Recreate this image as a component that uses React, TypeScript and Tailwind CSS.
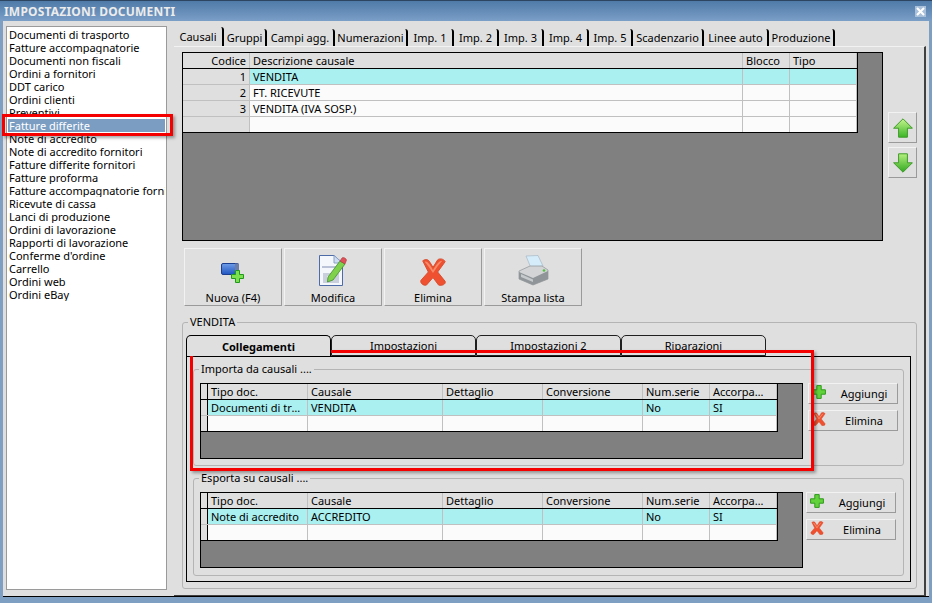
import type { ReactNode } from 'react';

const documentTypes = [
  'Documenti di trasporto',
  'Fatture accompagnatorie',
  'Documenti non fiscali',
  'Ordini a fornitori',
  'DDT carico',
  'Ordini clienti',
  'Preventivi',
  'Fatture differite',
  'Note di accredito',
  'Note di accredito fornitori',
  'Fatture differite fornitori',
  'Fatture proforma',
  'Fatture accompagnatorie fornito',
  'Ricevute di cassa',
  'Lanci di produzione',
  'Ordini di lavorazione',
  'Rapporti di lavorazione',
  "Conferme d'ordine",
  'Carrello',
  'Ordini web',
  'Ordini eBay',
];

const topTabs = [
  { label: 'Causali', width: 'w-[50px]' },
  { label: 'Gruppi', width: 'w-[43px]' },
  { label: 'Campi agg.', width: 'w-[68px]' },
  { label: 'Numerazioni', width: 'w-[73px]' },
  { label: 'Imp. 1', width: 'w-[46px]' },
  { label: 'Imp. 2', width: 'w-[45px]' },
  { label: 'Imp. 3', width: 'w-[45px]' },
  { label: 'Imp. 4', width: 'w-[45px]' },
  { label: 'Imp. 5', width: 'w-[44px]' },
  { label: 'Scadenzario', width: 'w-[71px]' },
  { label: 'Linee auto', width: 'w-[65px]' },
  { label: 'Produzione', width: 'w-[66px]' },
];

const causaliColumns = [
  { label: 'Codice', width: 'w-[67px]', right: true },
  { label: 'Descrizione causale', width: 'w-[493px]' },
  { label: 'Blocco', width: 'w-[47px]' },
  { label: 'Tipo', width: 'w-[67px]' },
];

const linkColumns = [
  { label: '', width: 'w-[7px]', indicator: true },
  { label: 'Tipo doc.', width: 'w-[100px]' },
  { label: 'Causale', width: 'w-[135px]' },
  { label: 'Dettaglio', width: 'w-[100px]' },
  { label: 'Conversione', width: 'w-[100px]' },
  { label: 'Num.serie', width: 'w-[67px]' },
  { label: 'Accorpam...', width: 'w-[67px]' },
];

type Column = { label: string; width: string; right?: boolean; indicator?: boolean };

function DataGrid({
  columns,
  rows,
  className,
  tableWidth,
}: {
  columns: Column[];
  rows: string[][];
  className: string;
  tableWidth: string;
}) {
  return (
    <div className={`border border-black bg-[#808080] ${className}`}>
      <div className={`border-r border-b border-black bg-[#fbfbfb] ${tableWidth}`}>
        <div className="flex h-4 border-b border-black bg-[#dfdfdf]">
          {columns.map((col, i) => (
            <div
              key={i}
              className={`${col.width} shrink-0 border-r border-[#c0c0c0] px-[3px] leading-[15px] truncate ${
                col.right ? 'text-right' : ''
              } ${col.indicator ? 'border-black' : ''}`}
            >
              {col.label}
            </div>
          ))}
        </div>
        {rows.map((row, r) => (
          <div
            key={r}
            className={`flex h-4 border-b border-[#c0c0c0] last:h-[15px] last:border-b-0 ${r === 0 ? 'bg-[#aaf0f0]' : ''}`}
          >
            {columns.map((col, i) => (
              <div
                key={i}
                className={`${col.width} shrink-0 border-r px-[3px] leading-[15px] truncate ${
                  col.right || col.indicator ? 'bg-[#dfdfdf]' : ''
                } ${col.right ? 'text-right' : ''} ${col.indicator ? 'border-black' : 'border-[#c0c0c0]'}`}
              >
                {row[i]}
              </div>
            ))}
          </div>
        ))}
      </div>
    </div>
  );
}

function GroupBox({ title, className, children }: { title: string; className: string; children: ReactNode }) {
  return (
    <div className={`relative rounded-[3px] border border-[#b4b4b4] ${className}`}>
      <span className="absolute left-[5px] top-[-8px] bg-[#dfdfdf] px-[2px] leading-[14px]">{title}</span>
      {children}
    </div>
  );
}

function RaisedButton({ className, children }: { className: string; children: ReactNode }) {
  return (
    <button className={`border border-t-[#f2f2f2] border-l-[#f2f2f2] border-r-[#9a9a9a] border-b-[#9a9a9a] bg-[#dfdfdf] ${className}`}>
      {children}
    </button>
  );
}

function ArrowIcon({ down }: { down?: boolean }) {
  return (
    <svg width="20" height="20" viewBox="0 0 20 20" className={down ? 'rotate-180' : ''}>
      <defs>
        <linearGradient id={down ? 'arrowDown' : 'arrowUp'} x1="0" y1="0" x2="0" y2="1">
          <stop offset="0" stopColor={down ? '#2fa81e' : '#c5f58e'} />
          <stop offset="1" stopColor={down ? '#b6f07f' : '#3bb526'} />
        </linearGradient>
      </defs>
      <path
        d="M10 .8 19.4 10.2H14.4V19.2H5.6V10.2H.6Z"
        fill={`url(#${down ? 'arrowDown' : 'arrowUp'})`}
        stroke="#3f9a2a"
        strokeWidth="1"
        strokeLinejoin="round"
      />
    </svg>
  );
}

function PlusIcon({ size = 14 }: { size?: number }) {
  return (
    <svg width={size} height={size} viewBox="0 0 14 14">
      <path
        d="M4.8.6H9.2V4.8H13.4V9.2H9.2V13.4H4.8V9.2H.6V4.8H4.8Z"
        fill="#62d23a"
        stroke="#2f9a1d"
        strokeWidth="1"
        strokeLinejoin="round"
      />
    </svg>
  );
}

function CrossIcon({ size = 14 }: { size?: number }) {
  return (
    <svg width={size} height={size} viewBox="0 0 28 30">
      <path
        d="M3 3C6 1 9 1 11 5L14 10 19 2C21 0 26 1 27 4L19 15 27 25C28 28 24 30 20 29L14 21 7 29C4 30 0 27 1 24L9 15Z"
        fill="#ee5030"
        stroke="#d84a2a"
        strokeWidth="1"
        strokeLinejoin="round"
      />
      <path d="M5 4C8 3 10 6 14 13 17 8 20 3 24 3 20 7 17 12 14 16 11 12 8 7 5 4Z" fill="#f58a68" />
    </svg>
  );
}

function NewIcon() {
  return (
    <svg width="25" height="23" viewBox="0 0 25 23">
      <defs>
        <linearGradient id="newBlue" x1="0" y1="0" x2="0" y2="1">
          <stop offset="0" stopColor="#6f9de8" />
          <stop offset="1" stopColor="#1f55c0" />
        </linearGradient>
      </defs>
      <rect x="0.5" y="2.5" width="17" height="11" rx="1.5" fill="url(#newBlue)" stroke="#1c3f8f" />
      <rect x="14" y="2.5" width="4" height="11" fill="#6b7fa8" />
      <path
        d="M14.5 9.5H18.5V13.5H22.5V17.5H18.5V21.5H14.5V17.5H10.5V13.5H14.5Z"
        fill="#7de04e"
        stroke="#1f9a1a"
        strokeWidth="1"
      />
    </svg>
  );
}

function EditIcon() {
  return (
    <svg width="28" height="31" viewBox="0 0 28 31">
      <path d="M.5.5H15L23.5 8V30.5H.5Z" fill="#f4f7fc" stroke="#4d6ba6" />
      <path d="M15 .5V8H23.5Z" fill="#cddcf0" stroke="#8aa2c8" />
      <rect x="3" y="11" width="18" height="2" fill="#b9c2d6" />
      <rect x="4" y="18" width="16" height="10" fill="#c9cfdc" />
      <rect x="8" y="21" width="8" height="2" fill="#eef1f6" />
      <path d="M9 22 21 6 26 9 14 25 8.5 27Z" fill="#7fd04a" stroke="#3f8f2a" strokeWidth="0.8" />
      <path d="M21 6 23 3C24 2 27 3 27.5 5L26 9Z" fill="#e0505a" stroke="#a83a3a" strokeWidth="0.6" />
    </svg>
  );
}

function PrinterIcon() {
  return (
    <svg width="31" height="31" viewBox="0 0 31 31">
      <path d="M8 1 20 0.5 25 11 13 13Z" fill="#d5ecfa" stroke="#a8b8c4" strokeWidth="0.7" />
      <path d="M1 16 12 11H24L30 15V24L15 30 1 24Z" fill="#d2d4d6" stroke="#8f9396" strokeWidth="0.7" />
      <path d="M1 17 15 23 30 16V24L15 30 1 24Z" fill="#8f9598" />
      <path d="M3 19 15 24.5 15 27 3 22Z" fill="#c6cacc" />
      <circle cx="26" cy="15.5" r="1.3" fill="#56c040" />
    </svg>
  );
}

function LinkSection({
  title,
  firstRow,
  groupClass,
  gridClass,
  buttonsClass,
}: {
  title: string;
  firstRow: string[];
  groupClass: string;
  gridClass: string;
  buttonsClass: string;
}) {
  return (
    <GroupBox title={title} className={`flex ${groupClass}`}>
      <DataGrid
        columns={linkColumns}
        rows={[firstRow, ['', '', '', '', '', '', '']]}
        tableWidth="w-[577px]"
        className={`ml-[6px] h-[76px] w-[603px] shrink-0 ${gridClass}`}
      />
      <div className={`flex flex-col ${buttonsClass}`}>
        <RaisedButton className="relative h-[21px] w-[90px] pl-[22px] leading-[19px]">
          Aggiungi
          <span className="absolute left-[3px] top-[1px]">
            <PlusIcon />
          </span>
        </RaisedButton>
        <RaisedButton className="relative h-[21px] w-[90px] pl-[22px] leading-[19px]">
          Elimina
          <span className="absolute left-[3px] top-[1px]">
            <CrossIcon />
          </span>
        </RaisedButton>
      </div>
    </GroupBox>
  );
}

export default function App() {
  return (
    <div className="relative flex h-[603px] w-[932px] flex-col overflow-hidden bg-[#7f9fc2] text-[11px] text-black [font-family:'Noto_Sans',sans-serif]">
      {/* Title bar */}
      <div className="flex h-[21px] shrink-0 items-center justify-between border-t border-[#2d4560] bg-gradient-to-b from-[#4f7aa8] to-[#7b9fc7] pl-[4px] pr-[6px] pt-[1px]">
        <span className="text-[12px] font-bold tracking-[0.2px] text-[#ececec]">IMPOSTAZIONI DOCUMENTI</span>
        <span className="flex h-[11px] w-[11px] items-center justify-center bg-[#a9c0da]">
          <svg width="9" height="9" viewBox="0 0 9 9">
            <path d="M1 1 8 8M8 1 1 8" stroke="#fff" strokeWidth="2" />
          </svg>
        </span>
      </div>

      {/* Window body */}
      <div className="mx-[3px] flex h-[576px] shrink-0 border-b border-black bg-[#dfdfdf]">
        <ul className="ml-[3px] mt-[5px] h-[564px] w-[161px] shrink-0 border border-[#9a9a9a] bg-white pt-[1px]">
          {documentTypes.map((doc) => (
            <li
              key={doc}
              className={`mx-[1px] h-[13px] overflow-hidden whitespace-nowrap pl-[1px] leading-[13px] ${
                doc === 'Fatture differite' ? 'bg-[#7b9dc2] text-white' : ''
              }`}
            >
              {doc}
            </li>
          ))}
        </ul>

        <div className="ml-[7px] flex w-[752px] shrink-0 flex-col">
          {/* Top tabs */}
          <div className="mt-[6px] flex h-[19px] shrink-0 items-end">
            {topTabs.map((tab, i) => (
              <div
                key={tab.label}
                className={`${tab.width} shrink-0 rounded-tr-[3px] border-r-2 border-black text-center ${
                  i === 0 ? 'h-[19px] leading-[19px]' : 'h-[17px] leading-[17px]'
                }`}
              >
                {tab.label}
              </div>
            ))}
          </div>

          <div className="h-[550px] shrink-0 border-t border-r-2 border-b border-t-[#f2f2f2] border-r-[#404040] border-b-[#404040]">
            <div className="flex">
              <DataGrid
                columns={causaliColumns}
                rows={[
                  ['1', 'VENDITA', '', ''],
                  ['2', 'FT. RICEVUTE', '', ''],
                  ['3', 'VENDITA (IVA SOSP.)', '', ''],
                  ['', '', '', ''],
                ]}
                tableWidth="w-[675px]"
                className="ml-[8px] mt-[5px] h-[189px] w-[701px] shrink-0"
              />
              <div className="ml-[5px] mt-[65px] flex flex-col gap-[4px]">
                <RaisedButton className="flex h-[31px] w-[29px] items-center justify-center">
                  <ArrowIcon />
                </RaisedButton>
                <RaisedButton className="flex h-[31px] w-[29px] items-center justify-center">
                  <ArrowIcon down />
                </RaisedButton>
              </div>
            </div>

            {/* Actions */}
            <div className="ml-[10px] mt-[7px] flex gap-[2px]">
              <RaisedButton className="flex h-[58px] w-[98px] flex-col items-center">
                <span className="flex h-[37px] items-end pb-[2px]"><NewIcon /></span>
                <span className="mt-[5px] leading-[14px]">Nuova (F4)</span>
              </RaisedButton>
              <RaisedButton className="flex h-[58px] w-[98px] flex-col items-center">
                <span className="flex h-[37px] items-end"><EditIcon /></span>
                <span className="mt-[5px] leading-[14px]">Modifica</span>
              </RaisedButton>
              <RaisedButton className="flex h-[58px] w-[98px] flex-col items-center">
                <span className="flex h-[37px] items-end"><CrossIcon size={28} /></span>
                <span className="mt-[5px] leading-[14px]">Elimina</span>
              </RaisedButton>
              <RaisedButton className="flex h-[58px] w-[98px] flex-col items-center">
                <span className="flex h-[37px] items-end"><PrinterIcon /></span>
                <span className="mt-[5px] leading-[14px]">Stampa lista</span>
              </RaisedButton>
            </div>

            {/* VENDITA */}
            <GroupBox title="VENDITA" className="ml-[8px] mt-[16px] h-[267px] w-[735px]">
              <div className="ml-[3px] mt-[12px] flex h-[21px] items-end">
                <div className="relative z-[1] h-[21px] w-[145px] rounded-t-[5px] border-x border-t border-black bg-[#dfdfdf] text-center font-bold leading-[22px]">
                  Collegamenti
                </div>
                {['Impostazioni', 'Impostazioni 2', 'Riparazioni'].map((tab) => (
                  <div
                    key={tab}
                    className="h-[21px] w-[145px] rounded-t-[5px] border border-[#202020] text-center leading-[20px]"
                  >
                    {tab}
                  </div>
                ))}
              </div>
              <div className="ml-[3px] h-[226px] w-[725px] border border-black pl-[6px] pt-[12px]">
                <LinkSection
                  title="Importa da causali ...."
                  firstRow={['', 'Documenti di tra...', 'VENDITA', '', '', 'No', 'SI']}
                  groupClass="h-[97px] w-[711px]"
                  gridClass="mt-[13px]"
                  buttonsClass="ml-[5px] mt-[13px] gap-[6px]"
                />
                <LinkSection
                  title="Esporta su causali ...."
                  firstRow={['', 'Note di accredito', 'ACCREDITO', '', '', 'No', 'SI']}
                  groupClass="mt-[12px] h-[98px] w-[711px]"
                  gridClass="mt-[13px]"
                  buttonsClass="ml-[3px] mt-[13px] gap-[6px]"
                />
              </div>
            </GroupBox>
          </div>
        </div>
      </div>

      {/* Highlight marks drawn over the screenshot */}
      <div className="pointer-events-none absolute left-[2px] top-[114px] h-[22px] w-[171px] border-[3px] border-[#f50000] shadow-[2px_2px_3px_rgba(0,0,0,0.35)]" />
      <div className="pointer-events-none absolute left-[190px] top-[350px] h-[121px] w-[624px] border-[3px] border-[#f50000] shadow-[2px_2px_3px_rgba(0,0,0,0.35)]" />
    </div>
  );
}
